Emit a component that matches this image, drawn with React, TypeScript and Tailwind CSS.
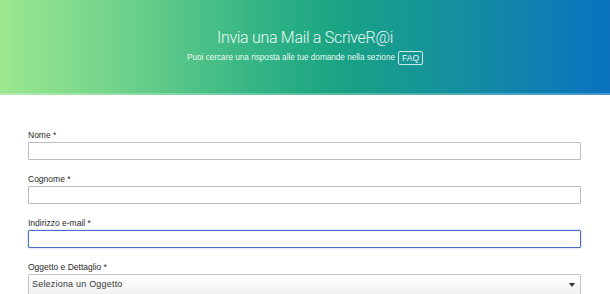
export default function App() {
  const fields = [
    { label: "Nome", kind: "input" },
    { label: "Cognome", kind: "input" },
    { label: "Indirizzo e-mail", kind: "focus" },
  ];
  return (
    <div className="w-[610px] h-[294px] overflow-hidden bg-white" style={{ fontFamily: '"Liberation Sans", Arial, sans-serif' }}>
      <header className="h-[95px] flex flex-col items-center pt-[27px] bg-[linear-gradient(90deg,#9ce88f_0%,#6fd28a_20%,#34b585_42%,#1aa483_55%,#148f9f_75%,#0a72c0_100%)] border-b-2 border-white/25">
        <h1 className="text-[16px] leading-[21px] font-light text-white/90 tracking-[-0.3px]" style={{ fontFamily: '"Roboto", "Liberation Sans", sans-serif' }}>
          Invia una Mail a ScriveR@i
        </h1>
        <div className="mt-[3px] flex items-center gap-[3px] text-[8.2px] leading-[12px] text-white/95">
          <span>Puoi cercare una risposta alle tue domande nella sezione</span>
          <span className="border border-white/80 rounded-[2px] px-[3px] h-[14px] flex items-center text-[8.5px]">FAQ</span>
        </div>
      </header>
      <form className="pl-[28px] pt-[35px] w-[581px]">
        {fields.map((f) => (
          <div key={f.label} className="mb-[14px]">
            <label className="block text-[8.5px] leading-[10px] font-medium text-[#2a2a2a] mb-[2px]">
              {f.label} *
            </label>
            <div
              className={
                f.kind === "focus"
                  ? "h-[18px] border border-[#4a70c4] rounded-[1px] shadow-[0_0_2px_rgba(74,112,196,0.5)]"
                  : "h-[18px] border border-[#bdbdbd] rounded-[1px]"
              }
            />
          </div>
        ))}
        <div>
          <label className="block text-[8.5px] leading-[10px] font-medium text-[#2a2a2a] mb-[2px]">
            Oggetto e Dettaglio *
          </label>
          <div className="h-[22px] border border-[#c4c4c4] rounded-[1px] bg-[linear-gradient(180deg,#ffffff,#f0f0f0)] flex items-center justify-between px-[3px]">
            <span className="text-[9px] font-normal text-[#3a3a3a] tracking-[0.2px]">Seleziona un Oggetto</span>
            <svg width="6" height="4" viewBox="0 0 6 4" className="mr-[2px]">
              <path d="M0 0 L6 0 L3 4 Z" fill="#333" />
            </svg>
          </div>
        </div>
      </form>
    </div>
  );
}
